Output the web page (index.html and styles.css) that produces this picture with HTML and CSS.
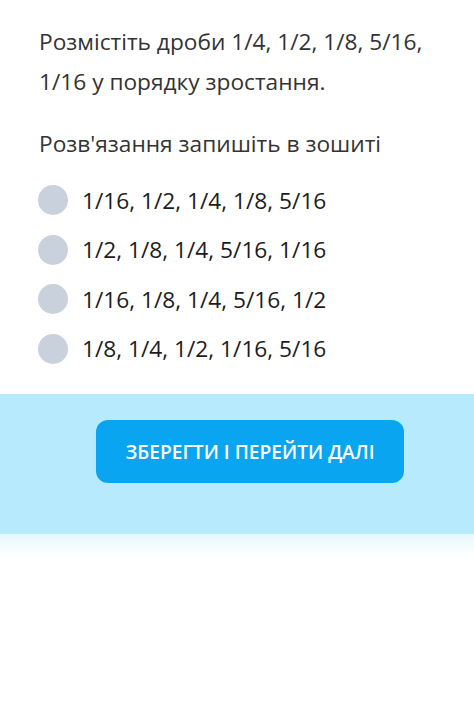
FILE: index.html
```html
<!DOCTYPE html>
<html lang="uk">
<head>
<meta charset="utf-8">
<link rel="stylesheet" href="styles.css">
</head>
<body>
<main class="page">
  <section class="question">
    <p class="prompt">Розмістіть дроби 1/4, 1/2, 1/8, 5/16, 1/16 у порядку зростання.</p>
    <p class="note">Розв'язання запишіть в зошиті</p>
    <ul class="options">
      <li class="option"><span class="radio"></span><span>1/16, 1/2, 1/4, 1/8, 5/16</span></li>
      <li class="option"><span class="radio"></span><span>1/2, 1/8, 1/4, 5/16, 1/16</span></li>
      <li class="option"><span class="radio"></span><span>1/16, 1/8, 1/4, 5/16, 1/2</span></li>
      <li class="option"><span class="radio"></span><span>1/8, 1/4, 1/2, 1/16, 5/16</span></li>
    </ul>
  </section>
  <section class="actions">
    <button class="save">ЗБЕРЕГТИ І ПЕРЕЙТИ ДАЛІ</button>
  </section>
  <div class="fade"></div>
</main>
</body>
</html>
```
FILE: styles.css
```css
html, body {
  margin: 0;
  padding: 0;
  background: #ffffff;
}
body {
  font-family: "Open Sans", "Noto Sans", sans-serif;
  color: #2a2a2a;
  width: 474px;
  height: 722px;
  overflow: hidden;
}
.page {
  display: flex;
  flex-direction: column;
}
.question {
  padding: 22px 20px 0 39px;
}
.prompt {
  margin: 0;
  font-size: 22.7px;
  line-height: 40px;
  color: #333;
}
.note {
  margin: 22px 0 0;
  font-size: 22.7px;
  line-height: 40px;
  color: #333;
}
.options {
  list-style: none;
  margin: 21px 0 0;
  padding: 0;
  display: flex;
  flex-direction: column;
  gap: 19.5px;
}
.option {
  display: flex;
  align-items: center;
  gap: 14px;
  height: 30px;
  font-size: 22.7px;
  color: #1c1c1c;
}
.radio {
  width: 30px;
  height: 30px;
  border-radius: 50%;
  background: #c9d1dc;
  flex: none;
  margin-left: -1px;
}
.actions {
  margin-top: 30px;
  height: 140px;
  background: #b7eafd;
  display: flex;
  justify-content: center;
  align-items: flex-start;
  padding-top: 26px;
  box-sizing: border-box;
}
.save {
  width: 308px;
  height: 63px;
  border: none;
  border-radius: 12px;
  background: #0aa5f0;
  color: #ffffff;
  font-family: "Open Sans", "Noto Sans", sans-serif;
  font-size: 19.2px;
  font-weight: 600;
  letter-spacing: 0;
  margin-left: 26px;
}
.fade {
  height: 22px;
  background: linear-gradient(#e6f8fe, #ffffff);
}
```
